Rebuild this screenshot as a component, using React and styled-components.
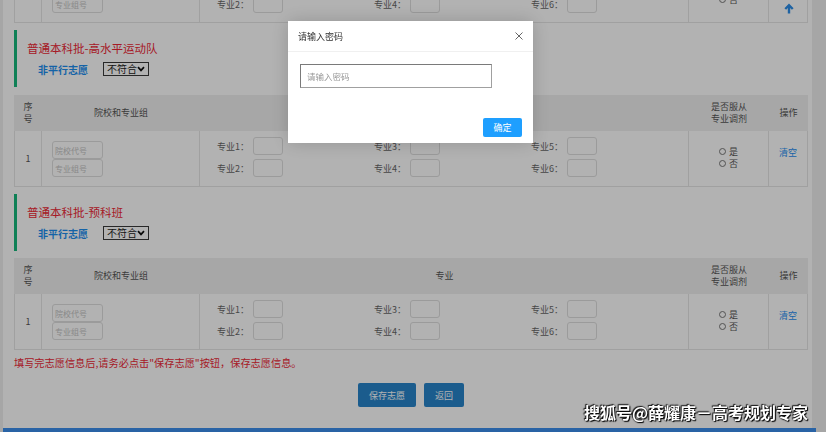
import React from 'react';
import styled, { createGlobalStyle } from 'styled-components';

const GlobalStyle = createGlobalStyle`
  html, body { margin: 0; padding: 0; background: #eeeeee; }
  body { font-family: "Noto Sans CJK SC", "Noto Sans", sans-serif; overflow: hidden; }
  #root { width: 826px; height: 432px; overflow: hidden; position: relative; }
  * { box-sizing: border-box; }
`;

const Page = styled.div`
  margin: 0 14px 0 3px;
  height: 432px;
  background: #fff;
  padding: 0 4px 0 11px;
  display: flex;
  flex-direction: column;
`;

const Section = styled.section`
  margin-top: 7px;
`;

const SectionHead = styled.div`
  height: 57px;
  border-left: 3px solid #16b87c;
  padding: 9px 0 0 10px;
`;

const SectionTitle = styled.div`
  font-size: 11.5px;
  line-height: 18px;
  color: #ee2836;
`;

const SubLine = styled.div`
  display: flex;
  align-items: center;
  gap: 15px;
  margin: 1px 0 0 11px;
  height: 22px;
`;

const SubLabel = styled.span`
  font-size: 10px;
  font-weight: bold;
  color: #1e8ff0;
`;

const SelectBox = styled.div`
  display: inline-flex;
  align-items: center;
  justify-content: space-between;
  width: 46px;
  height: 14px;
  padding: 0 3px 0 3px;
  border: 1px solid #3a3a3a;
  font-size: 10px;
  line-height: 12px;
  color: #222;
  background: #fff;
`;

const Grid = styled.div`
  display: grid;
  grid-template-columns: 28px 158px 489px 80px 39px;
  margin-top: ${p => p.$mt || 0}px;
`;

const HeadCell = styled.div`
  height: 36px;
  background: #f0f0f0;
  display: flex;
  align-items: center;
  justify-content: center;
  text-align: center;
  font-size: 9px;
  line-height: 12px;
  color: #555;
  padding: 0 ${p => p.$px || 0}px;
`;

const Cell = styled.div`
  height: 56px;
  border-right: 1px solid #e6e6e6;
  border-bottom: 1px solid #e6e6e6;
  &:first-child { border-left: 1px solid #e6e6e6; }
`;

const SeqCell = styled(Cell)`
  display: flex;
  align-items: center;
  justify-content: center;
  font-size: 9px;
  color: #555;
`;

const SchoolCell = styled(Cell)`
  display: flex;
  flex-direction: column;
  justify-content: flex-end;
  padding: 0 0 9px 10px;
`;

const Field = styled.input`
  width: ${p => p.$w}px;
  height: 18px;
  border: 1px solid #dedede;
  border-radius: 3px;
  padding: 0 2px;
  font-family: inherit;
  font-size: 8px;
  color: #555;
  background: #fff;
  outline: none;
  &::placeholder { color: #c4c4c4; }
`;

const MajorCell = styled(Cell)`
  display: grid;
  grid-template-columns: repeat(3, 157px);
  align-content: end;
  padding: 0 0 9px 17px;
`;

const MajorGroup = styled.div`
  display: flex;
  flex-direction: column;
  gap: 4px;
`;

const MajorLine = styled.div`
  display: flex;
  align-items: center;
  height: 18px;
`;

const MajorLabel = styled.span`
  width: 36px;
  font-size: 9px;
  color: #666;
`;

const AdjustCell = styled(Cell)`
  display: flex;
  flex-direction: column;
  align-items: center;
  padding-top: 14px;
`;

const RadioLine = styled.label`
  display: flex;
  align-items: center;
  height: 12px;
  font-size: 9px;
  color: #555;
`;

const RadioDot = styled.span`
  width: 7px;
  height: 7px;
  border: 1px solid #777;
  border-radius: 50%;
  margin-right: 3px;
  background: #fff;
`;

const OpCell = styled(Cell)`
  display: flex;
  justify-content: center;
  padding-top: 16px;
`;

const LinkText = styled.a`
  font-size: 9px;
  line-height: 12px;
  height: 12px;
  color: #1e8ff0;
  text-decoration: none;
`;

const Notice = styled.div`
  margin-top: 6px;
  font-size: 10.2px;
  line-height: 14px;
  color: #ee2836;
`;

const Actions = styled.div`
  margin-top: 13px;
  display: flex;
  justify-content: center;
  gap: 8px;
`;

const ActionButton = styled.button`
  height: 24px;
  padding: 0 11px;
  border: none;
  border-radius: 2px;
  background: #2785cb;
  color: #fff;
  font-family: inherit;
  font-size: 9px;
`;

const BottomBar = styled.div`
  margin: auto -8px 0 -11px;
  height: 4px;
  background: #3c8fec;
`;

const BackTop = styled.div`
  position: fixed;
  left: 783px;
  top: 2px;
  width: 11px;
  height: 12px;
  display: flex;
  align-items: center;
  justify-content: center;
`;

const Shade = styled.div`
  position: fixed;
  inset: 0;
  background: rgba(0, 0, 0, 0.3);
  z-index: 10;
`;

const Modal = styled.div`
  position: fixed;
  left: 288px;
  top: 21px;
  width: 245px;
  height: 122px;
  background: #fff;
  box-shadow: 0 0 18px rgba(0, 0, 0, 0.18);
  z-index: 11;
  display: flex;
  flex-direction: column;
`;

const ModalHead = styled.div`
  height: 31px;
  flex: none;
  border-bottom: 1px solid #f0f0f0;
  display: flex;
  align-items: center;
  justify-content: space-between;
  padding: 0 10px 0 10px;
  font-size: 9px;
  color: #333;
`;

const CloseBtn = styled.span`
  display: flex;
  width: 8px;
  height: 8px;
`;

const ModalBody = styled.div`
  flex: 1;
  display: flex;
  flex-direction: column;
  padding: 12px 11px 6px 12px;
`;

const PwdInput = styled.input`
  width: 192px;
  height: 24px;
  border: 1px solid #a0a0a0;
  border-top-color: #7a7a7a;
  border-left-color: #7a7a7a;
  padding: 0 6px;
  font-family: inherit;
  font-size: 8.5px;
  outline: none;
  caret-color: #333;
  &::placeholder { color: #999; }
`;

const ModalFoot = styled.div`
  margin-top: auto;
  display: flex;
  justify-content: flex-end;
`;

const ConfirmBtn = styled.button`
  height: 19px;
  padding: 0 10.5px;
  border: none;
  border-radius: 2px;
  background: #1e9fff;
  color: #fff;
  font-family: inherit;
  font-size: 9px;
`;

const Watermark = styled.div`
  position: fixed;
  right: 18px;
  top: 401px;
  z-index: 12;
  font-size: 16px;
  line-height: 22px;
  font-weight: bold;
  color: #fff;
  text-shadow: 0 0 2px #000, 1px 1px 1px #000, -1px -1px 1px #222;
`;

const Chevron = () => (
  <svg width="8" height="6" viewBox="0 0 8 6">
    <path d="M1 1.2 L4 4.4 L7 1.2" fill="none" stroke="#111" strokeWidth="1.7" />
  </svg>
);

const Radio = ({ label }) => (
  <RadioLine>
    <RadioDot />
    {label}
  </RadioLine>
);

const HeadRow = ({ mt }) => (
  <Grid $mt={mt}>
    <HeadCell $px={8}>序号</HeadCell>
    <HeadCell>院校和专业组</HeadCell>
    <HeadCell>专业</HeadCell>
    <HeadCell $px={18}>是否服从专业调剂</HeadCell>
    <HeadCell>操作</HeadCell>
  </Grid>
);

const BodyRow = ({ mt, showOp = true }) => (
  <Grid $mt={mt}>
    <SeqCell>1</SeqCell>
    <SchoolCell>
      <Field $w={51} placeholder="院校代号" />
      <Field $w={51} placeholder="专业组号" />
    </SchoolCell>
    <MajorCell>
      {[[1, 2], [3, 4], [5, 6]].map(pair => (
        <MajorGroup key={pair[0]}>
          {pair.map(n => (
            <MajorLine key={n}>
              <MajorLabel>专业{n}：</MajorLabel>
              <Field $w={30} />
            </MajorLine>
          ))}
        </MajorGroup>
      ))}
    </MajorCell>
    <AdjustCell>
      <Radio label="是" />
      <Radio label="否" />
    </AdjustCell>
    <OpCell>{showOp && <LinkText href="#">清空</LinkText>}</OpCell>
  </Grid>
);

const VolunteerSection = ({ title, headMt }) => (
  <Section>
    <SectionHead>
      <SectionTitle>{title}</SectionTitle>
      <SubLine>
        <SubLabel>非平行志愿</SubLabel>
        <SelectBox>
          不符合
          <Chevron />
        </SelectBox>
      </SubLine>
    </SectionHead>
    <HeadRow mt={headMt} />
    <BodyRow />
  </Section>
);

export default function App() {
  return (
    <>
      <GlobalStyle />
      <Page>
        <BodyRow mt={-33} showOp={false} />
        <VolunteerSection title="普通本科批-高水平运动队" headMt={8} />
        <VolunteerSection title="普通本科批-预科班" headMt={7} />
        <Notice>填写完志愿信息后,请务必点击"保存志愿"按钮，保存志愿信息。</Notice>
        <Actions>
          <ActionButton>保存志愿</ActionButton>
          <ActionButton>返回</ActionButton>
        </Actions>
        <BottomBar />
      </Page>
      <BackTop>
        <svg width="10" height="11" viewBox="0 0 10 11">
          <path d="M5 0.5 L9.6 5.2 L7.9 6.8 L6.2 5.1 L6.2 10.5 L3.8 10.5 L3.8 5.1 L2.1 6.8 L0.4 5.2 Z" fill="#2b8de8" />
        </svg>
      </BackTop>
      <Shade />
      <Modal>
        <ModalHead>
          请输入密码
          <CloseBtn>
            <svg width="8" height="8" viewBox="0 0 8 8">
              <path d="M0.5 0.5 L7.5 7.5 M7.5 0.5 L0.5 7.5" stroke="#555" strokeWidth="0.9" />
            </svg>
          </CloseBtn>
        </ModalHead>
        <ModalBody>
          <PwdInput type="password" placeholder="请输入密码" autoFocus />
          <ModalFoot>
            <ConfirmBtn>确定</ConfirmBtn>
          </ModalFoot>
        </ModalBody>
      </Modal>
      <Watermark>搜狐号@薛耀康－高考规划专家</Watermark>
    </>
  );
}
